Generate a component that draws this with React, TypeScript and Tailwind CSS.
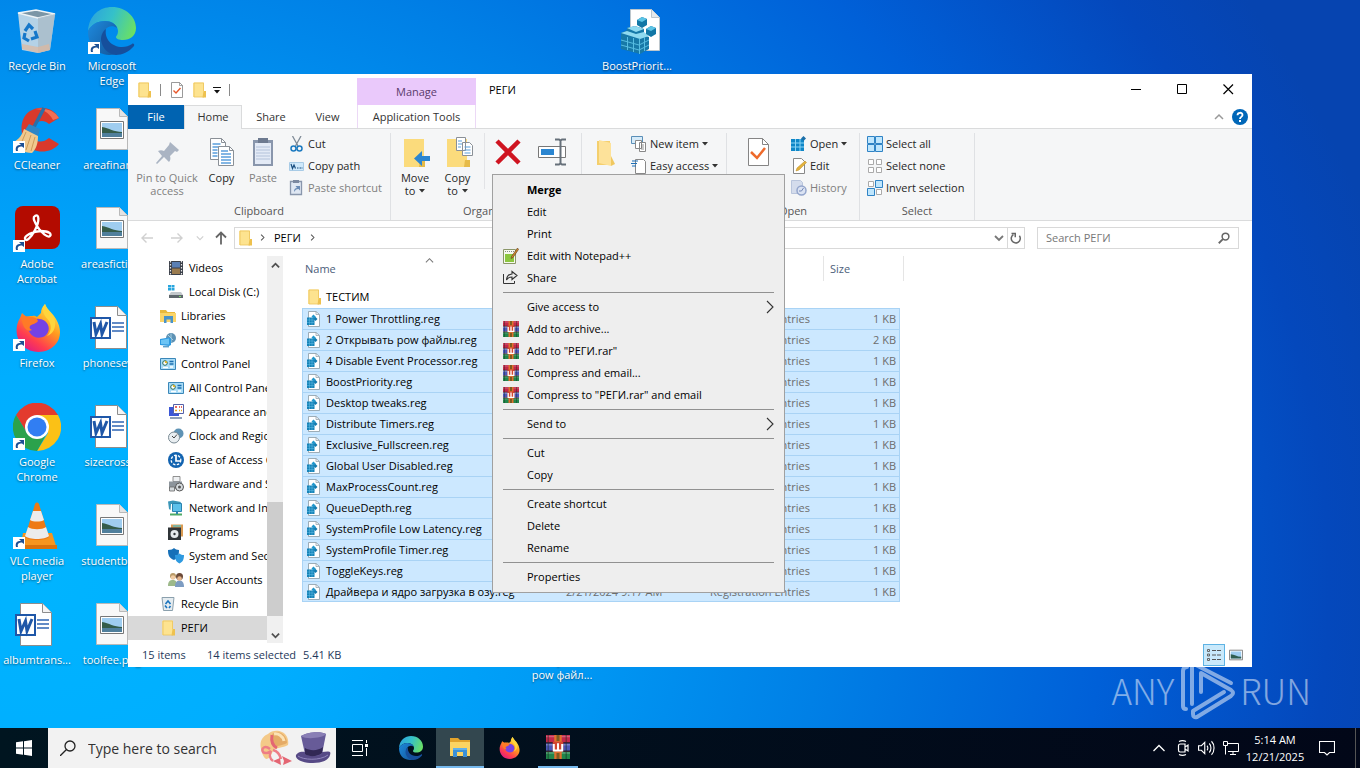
import type { ReactNode } from "react";

type IconProps = { size?: number; box?: string; className?: string; children: ReactNode };

function Icon({ size = 16, box = "0 0 16 16", className = "", children }: IconProps) {
  return (
    <svg width={size} height={size} viewBox={box} fill="none" aria-hidden="true" className={"shrink-0 " + className}>
      {children}
    </svg>
  );
}

/* ---------- small shared icons ---------- */

const Folder = ({ size = 16 }: { size?: number }) => (
  <Icon size={size}>
    <path d="M2.500 1H12v10l2.500 1v3h-12z" fill="#f7d775" />
    <path d="M2.500.5H13V15H2.500z" fill="#fde38f" />
    <path d="M12.500 9H15v6.500h-3.500z" fill="#eec14e" />
    <path d="M3 1v14h10M3 1h9.500v8" stroke="#ecc45a" strokeWidth=".8" />
  </Icon>
);

const PropertiesSheet = ({ size = 16 }: { size?: number }) => (
  <Icon size={size}>
    <path d="M2.500.5h8l3 3v12h-11z" fill="#fff" stroke="#808080" strokeWidth=".8" />
    <path d="M10.500.5v3h3" stroke="#808080" strokeWidth=".7" />
    <path d="M4.500 8.500 7 11l4.500-5" stroke="#e8572a" strokeWidth="1.400" />
  </Icon>
);

const RegFile = () => (
  <Icon>
    <path d="M2.500.5h7.500l3.500 3v12h-11z" fill="#fff" stroke="#8a9aa5" strokeWidth=".8" />
    <path d="M10 .5v3h3" stroke="#8a9aa5" strokeWidth=".7" />
    <path d="M1 6.500h7.500V14H1z" fill="#1583b8" />
    <path d="M1 9h7.500M1 11.500h7.500M3.500 6.500V14M6 6.500V14" stroke="#64bfe6" strokeWidth=".5" />
    <path d="m7.500 3.500 2.500 2.500-2 2L5.500 5.500z" fill="#2297cc" />
    <path d="m9.500 6 2 2-2 2-2-2z" fill="#127aae" />
  </Icon>
);

const Rar = ({ size = 16 }: { size?: number }) => (
  <Icon size={size}>
    <path d="M0 0h16v5H0z" fill="#c3274a" />
    <path d="M0 5.500h16v5H0z" fill="#4b57b8" />
    <path d="M0 11h16v5H0z" fill="#22864b" />
    <path d="M0 1h16M0 12h16M0 6.500h16" stroke="#fff" strokeOpacity=".25" />
    <path d="M1.500 0v16M13.500 0v16" stroke="#13281c" strokeOpacity=".4" />
    <path d="M0 5.200h16M0 10.800h16" stroke="#40202c" strokeWidth=".7" />
    <path d="M5.500 0h5v16h-5z" fill="#e0702d" />
    <path d="M7 0h2v4H7zM7 12h2v4H7z" fill="#7d5b22" />
    <path d="M4.500 4.500h7v6.500h-7z" fill="#d2462f" />
    <path d="M5.200 6v4.300h5.600V6M8 5.500v4.500" stroke="#fff" strokeWidth="1.300" />
  </Icon>
);

const Caret = () => (
  <svg width="6" height="4" viewBox="0 0 6 4" className="shrink-0" aria-hidden="true">
    <path d="M0 0h6L3 3.500z" fill="#333" />
  </svg>
);

const Chevron = ({ dir, color = "#666", size = 8, w = 1.5 }: { dir: "up" | "down" | "right"; color?: string; size?: number; w?: number }) => (
  <Icon size={size} box="0 0 10 10">
    <path d={dir === "up" ? "M1 7l4-4 4 4" : dir === "down" ? "M1 3l4 4 4-4" : "M3 1l4 4-4 4"} stroke={color} strokeWidth={w} />
  </Icon>
);

/* ---------- desktop ---------- */

const Shortcut = () => (
  <g>
    <path d="M0 35h12v12H0z" fill="#fff" />
    <path d="M3 45c-1-4 1-6 4-6h1l-2-2h5v5l-2-1.500c-3 0-5 1-4 4.500z" fill="#1d5094" />
  </g>
);

const EdgeArt = () => (
  <g>
    <defs>
      <linearGradient id="edgeTop" x1="0" y1="0" x2="48" y2="20" gradientUnits="userSpaceOnUse">
        <stop stopColor="#2b9fe0" />
        <stop offset=".5" stopColor="#35c1c9" />
        <stop offset="1" stopColor="#6be063" />
      </linearGradient>
      <linearGradient id="edgeLow" x1="0" y1="20" x2="40" y2="48" gradientUnits="userSpaceOnUse">
        <stop stopColor="#1d86d8" />
        <stop offset="1" stopColor="#114a8b" />
      </linearGradient>
    </defs>
    <path d="M0 24C1 8 12 0 24 0c14 0 24 10 24 21 0 8-6 12-13 12-4 0-7-1-7-3 0-1 2-2 2-6 0-5-5-10-13-10C9 14 3 18 0 24z" fill="url(#edgeTop)" />
    <path d="M0 24c3-6 9-10 17-10 6 0 11 3 12 7-7-5-16 2-14 11 2 8 9 12 17 12-3 3-7 4-11 4C7 47 0 37 0 24z" fill="url(#edgeLow)" />
    <path d="M18 22c-2 10 6 18 16 18 4 0 7-1 10-3 1-1 3 0 2 2-5 6-12 9-18 9-8-1-14-7-15-15 0-5 2-9 5-11z" fill="#164f9c" />
  </g>
);

const FirefoxArt = () => (
  <g>
    <defs>
      <linearGradient id="fox" x1="40" y1="4" x2="10" y2="46" gradientUnits="userSpaceOnUse">
        <stop stopColor="#fff04a" />
        <stop offset=".4" stopColor="#ff9a1f" />
        <stop offset=".75" stopColor="#ff3d4f" />
        <stop offset="1" stopColor="#e01b82" />
      </linearGradient>
    </defs>
    <path d="M30 0c2 6 8 9 11 15 6 10 5 20-1 26-8 9-24 9-32 1C0 34 0 22 5 14l2-5 4 4c2-1 4-1 6-1 0 0 3-1 5 1l4-4c0-3 1-6 4-9z" fill="url(#fox)" />
    <path d="M15 18c4-4 10-4 15-1 5 4 5 11 0 15-5 3-12 2-15-3-2-3-3-7 0-11z" fill="#7542e5" />
    <path d="M7 10c3 2 5 3 9 3 3 0 6 1 7 4-2 3-6 3-8 5-1 2 0 3 2 4-3 2-6 0-8-3-2-4-3-8-2-13z" fill="#ff7a26" />
    <path d="M30 0c-5 7 0 12 4 17 3 5 2 11-2 15 6-2 9-8 8-15-1-7-8-10-10-17z" fill="#ffd53c" />
  </g>
);

const WordArt = () => (
  <g>
    <path d="M7.500 2.500h22l9 9v33h-31z" fill="#fff" stroke="#8d8d8d" />
    <path d="M29.500 2.500v9h9" fill="#f4f4f4" stroke="#8d8d8d" />
    <path d="M24 19h12M24 23h12M24 27h12" stroke="#2f66b4" strokeWidth="1.300" />
    <path d="M3 14h19v20H3z" fill="#fff" stroke="#1f57a8" strokeWidth="2" />
    <path d="M6 18l2 12 4.500-10L14 30l5-12" stroke="#1f57a8" strokeWidth="3" />
  </g>
);

const PhotoArt = () => (
  <g>
    <path d="M8.500 2.500h23l8 8v33h-31z" fill="#f8f8f8" stroke="#b9b9b9" />
    <path d="M31.500 2.500v8h8" fill="#e3e3e3" stroke="#b9b9b9" />
    <path d="M12.500 15.500h23v17h-23z" fill="#fff" stroke="#777" />
    <path d="M14 17h20v14H14z" fill="#9fcdf0" />
    <path d="M14 21c7 1 12 5 20 5v2H14z" fill="#345c4a" />
    <path d="M14 27h20v4H14z" fill="#507f9c" />
  </g>
);

const desktopArt: Record<string, ReactNode> = {
  bin: (
    <g>
      <path d="M5 6l18-3 19 4-5 36-12 3-16-3z" fill="#d4dee5" fillOpacity=".85" />
      <path d="M5 6l20 5 17-4-19-4z" fill="#7b96a6" stroke="#eef4f7" strokeWidth="1.500" />
      <path d="M25 11l17-4-5 36-12 3z" fill="#a9bcc8" fillOpacity=".8" />
      <path d="M9 42l16 4 12-3-1-6-11 3-16-3z" fill="#dfb89c" fillOpacity=".7" />
      <path d="M12 24l4-6 4 4M22 24l2 6-6 2M16 34l-5-3 1-5" stroke="#1677c9" strokeWidth="3.200" />
    </g>
  ),
  edge: <><EdgeArt /><Shortcut /></>,
  ccleaner: (
    <g>
      <path d="M46 12L36 18c-6-6-17-3-17 8 0 9 9 13 17 6l10 6c-8 10-26 10-33 0C6 28 7 11 17 5c10-6 23-4 29 7z" fill="#d9392b" />
      <path d="M46 12c-4-7-14-11-24-9 7 0 14 3 18 11z" fill="#f16f55" />
      <path d="M31 2L21 21" stroke="#2a6fa8" strokeWidth="3.500" />
      <path d="M16 18l11 5-2 7-13-6z" fill="#2f86c6" />
      <path d="M11 23l14 7c0 8-2 13-6 17C10 47 4 43 1 36c5-3 8-7 10-13z" fill="#f0c98e" />
      <path d="M13 26L7 40M18 29l-5 15M22 31l-4 14" stroke="#cf9a58" />
      <Shortcut />
    </g>
  ),
  acrobat: (
    <g>
      <rect x="2" y="1" width="45" height="43" rx="8" fill="#b30b00" />
      <path d="M22 11c4-3 5 5 0 14-4 8-9 12-10 9s8-8 16-8 11 3 9 5-9-3-13-10-4-9-2-10z" stroke="#fff" strokeWidth="2.300" />
      <Shortcut />
    </g>
  ),
  firefox: <><g transform="translate(2 0)"><FirefoxArt /></g><Shortcut /></>,
  chrome: (
    <g>
      <path d="M24 12h21a24 24 0 0 0-42 0l11 18z" fill="#e33b2e" />
      <path d="M24 12h21a24 24 0 0 1-21 36l11-18z" fill="#fbc116" />
      <path d="M3 12l11 18a12 12 0 0 0 20 0L24 48A24 24 0 0 1 3 12z" fill="#2ba24c" />
      <circle cx="24" cy="24" r="12" fill="#fff" />
      <circle cx="24" cy="24" r="9.500" fill="#317ef3" />
      <Shortcut />
    </g>
  ),
  vlc: (
    <g>
      <path d="M10 31h29l5 16H7z" fill="#f5951f" />
      <path d="M7 43h37v4H7z" fill="#d9720d" />
      <path d="M22 2c1-2 3-2 4 0l10 33c-3 4-21 4-24 0z" fill="#ee7a15" />
      <path d="M20 9h8l3 9c-3 2-11 2-14 0zM15 25c4 3 14 3 18 0l3 9c-4 4-20 4-24 0z" fill="#ececec" />
      <Shortcut />
    </g>
  ),
  word: <WordArt />,
  photo: <PhotoArt />,
  reg: (
    <g>
      <path d="M17.500 2.500h21l8 8v33h-29z" fill="#fff" stroke="#bcc6cc" />
      <path d="M38.500 2.500v8h8" fill="#e5e9eb" stroke="#bcc6cc" />
      <path d="M8 26l6-3v-2l8-2 9 3v6l5 2v12l-9 5-19-5z" fill="#1779a8" />
      <path d="M8 26l6-2 9 3 8-2 5 4-9 3zM14 21l8-2 9 3-8 3z" fill="#8fdaf0" />
      <path d="M14.500 30v13M20.500 31v14M26.500 32v15M31.500 30v14M8 33l18 5 10-5M8 38l18 5 10-5" stroke="#57bde2" />
      <path d="M24 13l5-3 5 2v6l-5 3-5-3zM33 22l5-3 5 2v6l-5 3-5-3z" fill="#1277a6" />
      <path d="M24 13l5-3 5 2-5 3zM33 22l5-3 5 2-5 3z" fill="#5cc4e6" />
    </g>
  ),
};

const desktopItems = [
  { art: "bin", label: ["Recycle Bin"], col: "col-start-1", row: "row-start-1" },
  { art: "ccleaner", label: ["CCleaner"], col: "col-start-1", row: "row-start-2" },
  { art: "acrobat", label: ["Adobe", "Acrobat"], col: "col-start-1", row: "row-start-3" },
  { art: "firefox", label: ["Firefox"], col: "col-start-1", row: "row-start-4" },
  { art: "chrome", label: ["Google", "Chrome"], col: "col-start-1", row: "row-start-5" },
  { art: "vlc", label: ["VLC media", "player"], col: "col-start-1", row: "row-start-6" },
  { art: "word", label: ["albumtrans..."], col: "col-start-1", row: "row-start-7" },
  { art: "edge", label: ["Microsoft", "Edge"], col: "col-start-2", row: "row-start-1" },
  { art: "photo", label: ["areafinan..."], col: "col-start-2", row: "row-start-2" },
  { art: "photo", label: ["areasfictio..."], col: "col-start-2", row: "row-start-3" },
  { art: "word", label: ["phonesev..."], col: "col-start-2", row: "row-start-4" },
  { art: "word", label: ["sizecross..."], col: "col-start-2", row: "row-start-5" },
  { art: "photo", label: ["studentbo..."], col: "col-start-2", row: "row-start-6" },
  { art: "photo", label: ["toolfee.png"], col: "col-start-2", row: "row-start-7" },
  { art: "reg", label: ["2 Открывать", "pow файл..."], col: "col-start-8", row: "row-start-7" },
  { art: "reg", label: ["BoostPriorit..."], col: "col-start-9", row: "row-start-1" },
];

function Desktop() {
  return (
    <div className="grid auto-cols-[74px] grid-rows-[repeat(7,99px)] justify-start gap-x-px">
      {desktopItems.map((d) => (
        <button key={d.label.join()} className={"flex flex-col items-center gap-[3px] pt-[7px] leading-[15px] text-white [text-shadow:0_1px_2px_rgb(0_0_0/0.5)] " + d.col + " " + d.row}>
          <Icon size={48} box="0 0 48 48">{desktopArt[d.art]}</Icon>
          <span className="flex flex-col items-center whitespace-nowrap">
            {d.label.map((l) => <span key={l}>{l}</span>)}
          </span>
        </button>
      ))}
    </div>
  );
}

/* ---------- explorer: title and ribbon ---------- */

function TitleBar() {
  return (
    <header className="flex h-[31px] shrink-0 bg-white">
      <div className="flex w-[229px] items-center pl-2">
        <Folder />
        <span className="mx-2 h-3 w-px bg-[#8a8a8a]" />
        <button aria-label="Properties"><PropertiesSheet /></button>
        <button aria-label="New folder" className="ml-1.5"><Folder /></button>
        <button aria-label="Customize toolbar" className="ml-1.5">
          <svg width="8" height="8" viewBox="0 0 8 8" aria-hidden="true"><path d="M0 1.500h8" stroke="#111" /><path d="M1 4h6L4 7.500z" fill="#111" /></svg>
        </button>
        <span className="ml-2 h-3 w-px bg-[#8a8a8a]" />
      </div>
      <div className="mt-1 flex w-[119px] items-center justify-center bg-[#eac9fb] text-[#5a3b6b]">Manage</div>
      <h1 className="flex flex-1 items-center pl-[13px] text-black">РЕГИ</h1>
      <div className="flex items-center text-black">
        <button aria-label="Minimize" className="flex w-[45px] justify-center"><Icon size={11} box="0 0 11 11"><path d="M0 5.500h10" stroke="#000" /></Icon></button>
        <button aria-label="Maximize" className="flex w-[46px] justify-center"><Icon size={11} box="0 0 11 11"><path d="M.5.5h9v9h-9z" stroke="#000" /></Icon></button>
        <button aria-label="Close" className="flex w-[47px] justify-center"><Icon size={11} box="0 0 11 11"><path d="M.5.5l9.500 9.500M10 .5L.5 10" stroke="#000" strokeWidth="1.200" /></Icon></button>
      </div>
    </header>
  );
}

function Tabs() {
  return (
    <nav className="flex h-6 shrink-0 border-b border-[#dadbdc] text-[#333]">
      <button className="h-6 w-14 bg-[#0063b1] text-white">File</button>
      <button className="h-6 w-[58px] border border-b-0 border-[#dadbdc] bg-[#f5f6f7] pb-0.5">Home</button>
      <button className="w-[58px]">Share</button>
      <button className="w-[57px] pr-0.5">View</button>
      <button className="w-[119px] whitespace-nowrap border-x border-[#ecd9f6]">Application Tools</button>
      <div className="flex flex-1 items-center justify-end gap-2 pr-1">
        <button aria-label="Collapse ribbon"><Chevron dir="up" color="#999" size={10} /></button>
        <button aria-label="Help">
          <Icon>
            <circle cx="8" cy="8" r="8" fill="#0067b8" />
            <path d="M5.500 6.200C5.500 3 10.500 3 10.500 6c0 2-2.500 1.800-2.500 4" stroke="#fff" strokeWidth="1.800" />
            <path d="M7 11h2v2H7z" fill="#fff" />
          </Icon>
        </button>
      </div>
    </nav>
  );
}

function Group({ label, width, children }: { label: string; width: string; children: ReactNode }) {
  return (
    <section aria-label={label} className={"flex shrink-0 flex-col border-r border-[#dfe1e4] " + width}>
      <div className="flex flex-1">{children}</div>
      <h2 className="h-[17px] text-center leading-4 text-[#555]">{label}</h2>
    </section>
  );
}

function Big({ art, name, lines = [], caret, dim, width }: { art: ReactNode; name: string; lines?: string[]; caret?: boolean; dim?: boolean; width: string }) {
  return (
    <button aria-label={name} className={"flex shrink-0 flex-col items-center gap-[3px] pt-[3px] leading-[13px] " + width + (dim ? " text-[#808080]" : " text-[#262626]")}>
      <Icon size={32} box="0 0 32 32">{art}</Icon>
      <span className="flex flex-col items-center whitespace-nowrap">
        {lines.map((l, i) => (
          <span key={l} className="flex items-center gap-1">{l}{caret && i === lines.length - 1 ? <Caret /> : null}</span>
        ))}
      </span>
    </button>
  );
}

function Small({ art, label, caret, dim }: { art: ReactNode; label: string; caret?: boolean; dim?: boolean }) {
  return (
    <button className={"flex h-[22px] items-center gap-[3px] whitespace-nowrap " + (dim ? "text-[#808080]" : "text-[#262626]")}>
      <Icon>{art}</Icon>
      {label}
      {caret ? <Caret /> : null}
    </button>
  );
}

function Ribbon() {
  return (
    <div className="flex h-[92px] shrink-0 overflow-hidden border-b border-[#dadbdc] bg-[#f5f6f7] pt-1">
      <Group label="Clipboard" width="w-[263px]">
        <Big name="Pin to Quick access" width="w-[78px]" dim lines={["Pin to Quick", "access"]} art={<path d="M19 6l9 8-2 2-2-1-5 5c1 3 0 5-1 6l-5-5-7 7-1-1 6-7-4-5c2-1 4-1 6 0l5-6z" fill="#aab4c3" />} />
        <Big name="Copy" width="w-[31px]" lines={["Copy"]} art={
          <g>
            <path d="M4.500 2.500h11l4 4v17h-15z" fill="#fff" stroke="#8a9097" />
            <path d="M6.500 8h8M6.500 11h11M6.500 14h5M6.500 17h5M6.500 20h5" stroke="#5b9fdb" strokeWidth="1.300" />
            <path d="M12.500 10.500h11l4 4v15h-15z" fill="#fff" stroke="#8a9097" />
            <path d="M15 15h7M15 18h10M15 21h10M15 24h10M15 27h10" stroke="#5b9fdb" strokeWidth="1.300" />
            <path d="M15.500 2.500v4h4M23.500 10.500v4h4" stroke="#8a9097" />
          </g>} />
        <Big name="Paste" width="w-[52px]" dim lines={["Paste"]} art={
          <g>
            <path d="M6 4h20v26H6z" fill="#8996ac" />
            <path d="M8 7h16v21H8z" fill="#e3eaf6" />
            <path d="M11 2h10v5H11z" fill="#6d7a90" />
            <path d="M9 11h14M9 14h14M9 17h14M9 20h14M9 23h14" stroke="#b3c2da" />
          </g>} />
        <div className="flex flex-col">
          <Small label="Cut" art={<g><path d="M3.500 0l5.500 10M12 0L6.500 10" stroke="#7f8b97" strokeWidth="1.300" /><circle cx="4.500" cy="12.500" r="2.500" stroke="#1c7ac0" strokeWidth="1.500" /><circle cx="10.500" cy="12.500" r="2.500" stroke="#1c7ac0" strokeWidth="1.500" /></g>} />
          <Small label="Copy path" art={<g><path d="M.5 4.500h14v8H.5z" fill="#cfe9fb" stroke="#a8cbe6" /><path d="M2 6l1.500 4.500L5 7l1.500 3.500M8 10h1.500M10.500 10H12M12.500 10h1" stroke="#1b4f80" strokeWidth="1.200" /></g>} />
          <Small dim label="Paste shortcut" art={<g><path d="M1.500 1.500h11v13h-11z" fill="#dfe7f3" stroke="#8996ac" strokeWidth="1.300" /><path d="M4 0h6v3H4z" fill="#7b88a0" /><path d="M5 12c0-3 1-4 3-4L6.500 6h4.500v4.500L9.500 9C7 9 6.500 10 5 12z" fill="#6b8bb5" /></g>} />
        </div>
      </Group>

      <Group label="Organize" width="w-[191px]">
        <Big name="Move to" width="w-[48px]" caret lines={["Move", "to"]} art={
          <g><path d="M5 3h20v28H5z" fill="#fbdb7c" /><path d="M21 22h5v9h-6z" fill="#e6bb48" /><path d="M31 20v5h-8v5l-8-7.500 8-7.500v5z" fill="#2b86d1" /></g>} />
        <Big name="Copy to" width="w-[37px]" caret lines={["Copy", "to"]} art={
          <g><path d="M5 3h20v28H5z" fill="#fbdb7c" /><path d="M23 24h5v7h-6z" fill="#e6bb48" /><path d="M14.500 1.500h9v13h-9zM20.500 6.500h7l3 3v10h-10z" fill="#fff" stroke="#8a9097" /><path d="M16 5h4M16 8h4M16 11h3M22.500 11h6M22.500 14h6M22.500 17h6" stroke="#5b9fdb" strokeWidth="1.200" /></g>} />
        <span className="ml-2 h-14 w-px bg-[#e2e3e6]" />
        <Big name="Delete" width="w-[46px]" art={<path d="M5 5l22 22M27 5L5 27" stroke="#cf1420" strokeWidth="4.500" />} />
        <Big name="Rename" width="w-[44px]" art={
          <g><path d="M1.500 10.500h27v11h-27z" fill="#fff" stroke="#777" /><path d="M4 13h13v6H4z" fill="#2b86d1" /><path d="M18 3.500h4l1.500 1L25 3.500h4M18 28.500h4l1.500-1 1.500 1h4M23.500 4v24" stroke="#66707a" strokeWidth="2" /></g>} />
      </Group>

      <Group label="New" width="w-[145px]">
        <Big name="New folder" width="w-[47px]" art={<g><path d="M7 5h13v24H7z" fill="#f4cf6d" /><path d="M9 4l12 3v23L9 27z" fill="#fde29a" /><path d="M21 20l4 8-4 2z" fill="#f0c860" /></g>} />
        <div className="flex flex-col pl-0.5">
          <Small caret label="New item" art={<g><path d="M.5.5h11v7H.5z" fill="#d6ebf9" stroke="#5a8fb8" /><path d="M4.500 4.500h6v8h-6zM8.500 6.500h6v9h-6z" fill="#fff" stroke="#888" /><path d="M10 9h3M10 11h3M10 13h3" stroke="#777" strokeWidth=".8" /></g>} />
          <Small caret label="Easy access" art={<g><path d="M4.500 1.500h8l2 2v12h-10z" fill="#fff" stroke="#888" /><path d="M1 3h6M0 5.500h6M1 8h4" stroke="#1c6fb8" strokeWidth="1.200" /></g>} />
        </div>
      </Group>

      <Group label="Open" width="w-[133px]">
        <Big name="Properties" width="w-[61px]" art={<g><path d="M6.500 2.500h14l6 6v21h-20z" fill="#fff" stroke="#858585" /><path d="M20.500 2.500v6h6" stroke="#858585" /><path d="M9 16l6 6 8-10" stroke="#ee6a2b" strokeWidth="2.500" /></g>} />
        <div className="flex flex-col pl-[3px]">
          <Small caret label="Open" art={<g><path d="M0 3h13v12H0z" fill="#0f86c7" /><path d="M0 7h13M0 11h13M4.500 3v12M9 3v12" stroke="#8ad4f5" /><path d="m12.500 0 2.500 2.500-2.500 2.500L10 2.500z" fill="#1c6fa8" /></g>} />
          <Small label="Edit" art={<g><path d="M2.500.5h8l3 3v12h-11z" fill="#fff" stroke="#888" /><path d="M5 13l1-3 8-7 1.500 1.500L8 12z" fill="#e3b23c" stroke="#b98a22" strokeWidth=".5" /></g>} />
          <Small dim label="History" art={<g><path d="M.5.5h9l2 2v11H.5z" fill="#d4dcec" stroke="#b9c5dc" /><circle cx="10.500" cy="10.500" r="4.500" fill="#dbe3f3" stroke="#93a5cc" strokeWidth="1.500" /><path d="M8 11h2.500l2-3" stroke="#7387b5" /></g>} />
        </div>
      </Group>

      <Group label="Select" width="w-[115px]">
        <div className="flex flex-col pl-[7px]">
          <Small label="Select all" art={<path d="M.5.5h7v7h-7zM8.500.5h7v7h-7zM.5 8.500h7v7h-7zM8.500 8.500h7v7h-7z" fill="#bfe6fd" stroke="#2f83c5" />} />
          <Small label="Select none" art={<path d="M1.500 1.500h5v5h-5zM9.500 1.500h5v5h-5zM1.500 9.500h5v5h-5zM9.500 9.500h5v5h-5z" fill="#fff" stroke="#aaa" />} />
          <Small label="Invert selection" art={<g><path d="M1.500 1.500h5v5h-5zM9.500 9.500h5v5h-5z" fill="#fff" stroke="#aaa" /><path d="M8.500.5h7v7h-7zM.5 8.500h7v7h-7z" fill="#bfe6fd" stroke="#2f83c5" /></g>} />
        </div>
      </Group>
    </div>
  );
}

function AddressBar() {
  return (
    <div className="flex h-[35px] shrink-0 items-center pr-[13px] pb-0.5 pl-3">
      <button aria-label="Back" className="w-7"><Icon><path d="M13 8H2M6.500 3.500L2 8l4.500 4.500" stroke="#d0d0d0" strokeWidth="1.400" /></Icon></button>
      <button aria-label="Forward" className="w-7"><Icon><path d="M3 8h11M9.500 3.500L14 8l-4.500 4.500" stroke="#d0d0d0" strokeWidth="1.400" /></Icon></button>
      <button aria-label="Recent locations" className="w-[17px]"><Chevron dir="down" color="#d0d0d0" size={8} /></button>
      <button aria-label="Up" className="w-[21px]"><Icon><path d="M8 14.500V2.500M3 7.500l5-5 5 5" stroke="#666" strokeWidth="1.800" /></Icon></button>
      <div className="flex h-[22px] flex-1 items-center border border-[#d9d9d9] pl-0.5 text-black">
        <Folder />
        <span className="pl-1.5"><Chevron dir="right" color="#555" size={7} /></span>
        <button className="px-2">РЕГИ</button>
        <Chevron dir="right" color="#555" size={7} />
        <span className="flex-1" />
        <button aria-label="Previous locations" className="flex w-4 justify-center"><Chevron dir="down" color="#777" size={10} w={1.8} /></button>
        <button aria-label="Refresh" className="flex h-full w-[17px] items-center justify-center border-l border-[#d9d9d9]">
          <Icon size={12}><path d="M12.500 5a6 6 0 1 1-8-1.500M2 2h5v5" stroke="#666" strokeWidth="2" /></Icon>
        </button>
      </div>
      <label className="ml-3 flex h-[22px] w-[202px] items-center border border-[#d9d9d9] px-2">
        <span className="sr-only">Search in РЕГИ</span>
        <input type="search" placeholder="Search РЕГИ" className="h-full min-w-0 flex-1 bg-transparent outline-none placeholder:text-[#777]" />
        <Icon size={12}><circle cx="10" cy="6" r="4.500" stroke="#666" strokeWidth="2" /><path d="M6.500 9.500L1 15" stroke="#666" strokeWidth="2.400" /></Icon>
      </label>
    </div>
  );
}

/* ---------- explorer: navigation pane ---------- */

const panel = <g><path d="M.5 2.500h15v11H.5z" fill="#a9dcf7" stroke="#3b87b8" /><circle cx="5" cy="7" r="2.300" fill="#fff" stroke="#2a6d58" /><path d="M5 7V4.700A2.300 2.300 0 0 1 7.300 7z" fill="#e4b52c" /><path d="M9.500 5.500h4M9.500 8h4" stroke="#1d6fb0" strokeWidth="1.300" /><path d="M3 11.500h5M10 11h3" stroke="#fff" strokeWidth="1.300" /></g>;

const navItems: { label: string; deep?: boolean; art: ReactNode }[] = [
  { label: "Videos", deep: true, art: <g><path d="M1 1h14v14H1z" fill="#3a3f49" /><path d="M4 2h8v5.500H4z" fill="#5a7fb4" /><path d="M4 8.500h8V14H4z" fill="#9a7b4f" /><path d="M2.500 1v14M13.500 1v14" stroke="#e8e8e8" strokeWidth="1.200" strokeDasharray="1.500 1.500" /></g> },
  { label: "Local Disk (C:)", deep: true, art: <g><path d="M0 1h3v2.500H0zM3.500 1h3v2.500h-3zM0 4h3v2.500H0zM3.500 4h3v2.500h-3z" fill="#27a5de" /><path d="M3 8h10l2 3H1z" fill="#c3c8cc" /><path d="M1 11h14v3H1z" fill="#5e666c" /><path d="M11 12.500h2" stroke="#7fe06a" /></g> },
  { label: "Libraries", art: <g><path d="M0 2h6l1.500 2H15v10H0z" fill="#eab93c" /><path d="M0 5h16v9H0z" fill="#fbd569" /><path d="M4 8h9v7h-2.500v-3.500h-4V15H4z" fill="#4a93c9" /></g> },
  { label: "Network", art: <g><circle cx="11" cy="6" r="5" fill="#5f93b5" /><path d="M8 3l5 5M11 1.500v9" stroke="#a5cfe2" /><path d="M0 7l9-1.500 2 1v6.500L9 14 0 13z" fill="#2f9ae0" /><path d="M1 8l8-1.500v6L1 12z" fill="#6cc4f5" /><path d="M3 14.800h6" stroke="#1d78b4" /></g> },
  { label: "Control Panel", art: panel },
  { label: "All Control Panel Items", deep: true, art: panel },
  { label: "Appearance and Personalization", deep: true, art: <g><path d="M1 3h10v9H1z" fill="#3c57d6" /><path d="M5.500.5h10v9h-10z" fill="#fff" stroke="#5560a8" /><path d="M7 3h2M11 3h1M13 3h1" stroke="#e23b2e" strokeWidth="1.500" /><path d="M7 6.500h2M11 6.500h1M13 6.500h1" stroke="#e8a61d" strokeWidth="1.500" /><path d="M2 14h12" stroke="#8fa0b8" strokeWidth="2" /></g> },
  { label: "Clock and Region", deep: true, art: <g><circle cx="10.500" cy="5.500" r="5" fill="#5f93b5" /><circle cx="6" cy="9.500" r="5.500" fill="#e9eef1" stroke="#7a8a94" /><path d="M6 10l3-3.500M6 10L4 8" stroke="#444" /></g> },
  { label: "Ease of Access Center", deep: true, art: <g><circle cx="8" cy="8" r="8" fill="#1263b0" /><path d="M8 3v6h4.500" stroke="#fff" strokeWidth="1.700" /><circle cx="8" cy="8" r="4.800" stroke="#fff" strokeWidth="1.300" strokeDasharray="2.500 1.500" /></g> },
  { label: "Hardware and Sound", deep: true, art: <g><path d="M5 .5h7v5H5z" fill="#eef0f2" stroke="#777" strokeWidth=".8" /><path d="M1 5.500h13V13H1z" fill="#8d959c" /><path d="M1.500 11h5v4h-5z" fill="#d5dadd" stroke="#666" strokeWidth=".8" /><circle cx="11.500" cy="11" r="4" fill="#d5dadd" stroke="#555" /><circle cx="11.500" cy="11" r="1.500" fill="#555" /></g> },
  { label: "Network and Internet", deep: true, art: <g><path d="M0 1.500l5-1 8 1.500-1 2H3l-.5 6L1 9z" fill="#3b96b8" /><path d="M4.500 3.500h9v8h-9z" fill="#5cc0ea" stroke="#2a83b0" /><path d="M2 14.500h12" stroke="#4faa66" strokeWidth="2" /><path d="M9 11v3" stroke="#2a83b0" strokeWidth="2" /></g> },
  { label: "Programs", deep: true, art: <g><path d="M3 .5h12v12H3z" fill="#d99a52" /><path d="M5 1h8v2H5z" fill="#7fb3a0" /><path d="M0 3.500h13V16H0z" fill="#2f3437" /><circle cx="6.500" cy="10" r="4" fill="#e6eaec" /><circle cx="6.500" cy="10" r="1.200" fill="#2f3437" /></g> },
  { label: "System and Security", deep: true, art: <g><path d="M0 2c3 0 5-1 6-2 1 1 3 2 5 2 0 5-1 8-5 10C1 10 0 7 0 2z" fill="#1670b8" /><path d="M7 7c2 0 3-.5 4.500-1.500C13 6.500 14 7 16 7c0 4-1 7-4.500 8.500C8 14 7 11 7 7z" fill="#2f9ae0" /></g> },
  { label: "User Accounts", deep: true, art: <g><circle cx="5" cy="4" r="3" fill="#b89a68" /><circle cx="11.500" cy="4.500" r="3.500" fill="#6b4a38" /><path d="M0 14c0-5 2-6 5-6s4 2 4 6z" fill="#9db98a" /><path d="M7 15c0-5 2-6.500 4.500-6.500S16 10 16 15z" fill="#7d9cc2" /><circle cx="5" cy="5.500" r="2.200" fill="#f1cba3" /><circle cx="11.500" cy="6.500" r="2.300" fill="#e6b58c" /></g> },
  { label: "Recycle Bin", art: <g><path d="M2 1.500h12l-1.500 13h-9z" fill="#e5ecf0" stroke="#8ba0ad" /><path d="M5.500 8L8 5l2.500 3M10.500 10L9 12M7 12l-2-2.500" stroke="#1b74bd" strokeWidth="1.600" /></g> },
];

function NavPane() {
  return (
    <aside className="flex w-[155px] shrink-0">
      <ul className="w-[139px] overflow-hidden whitespace-nowrap text-black">
        {navItems.map((n) => (
          <li key={n.label}>
            <button className={"flex h-6 w-full items-center gap-[5px] " + (n.deep ? "pl-10" : "pl-8")}><Icon>{n.art}</Icon>{n.label}</button>
          </li>
        ))}
        <li>
          <button className="flex h-6 w-full items-center gap-[5px] bg-[#d9d9d9] pl-8"><Folder />РЕГИ</button>
        </li>
      </ul>
      <div className="flex w-4 flex-col items-center bg-[#f0f0f0]">
        <button aria-label="Scroll up" className="flex h-[18px] items-center"><Chevron dir="up" color="#505050" size={9} w={2} /></button>
        <div className="flex w-full flex-1 items-end"><div className="h-[114px] w-full bg-[#cdcdcd]" /></div>
        <button aria-label="Scroll down" className="flex h-[27px] items-center pt-3"><Chevron dir="down" color="#505050" size={9} w={2} /></button>
      </div>
    </aside>
  );
}

/* ---------- explorer: file list ---------- */

const files: { name: string; date?: string; size: string }[] = [
  { name: "1 Power Throttling.reg", size: "1 KB" },
  { name: "2 Открывать pow файлы.reg", size: "2 KB" },
  { name: "4 Disable Event Processor.reg", size: "1 KB" },
  { name: "BoostPriority.reg", size: "1 KB" },
  { name: "Desktop tweaks.reg", size: "1 KB" },
  { name: "Distribute Timers.reg", size: "1 KB" },
  { name: "Exclusive_Fullscreen.reg", size: "1 KB" },
  { name: "Global User Disabled.reg", size: "1 KB" },
  { name: "MaxProcessCount.reg", size: "1 KB" },
  { name: "QueueDepth.reg", size: "1 KB" },
  { name: "SystemProfile Low Latency.reg", size: "1 KB" },
  { name: "SystemProfile Timer.reg", size: "1 KB" },
  { name: "ToggleKeys.reg", size: "1 KB" },
  { name: "Драйвера и ядро загрузка в озу.reg", date: "2/21/2024 9:17 AM", size: "1 KB" },
];

function FileList() {
  return (
    <div className="flex min-w-0 flex-1 items-start overflow-hidden pl-[19px]">
      <table className="w-[598px] table-fixed border-separate border-spacing-0 whitespace-nowrap text-left">
        <thead className="text-[#4c607a]">
          <tr className="h-[25px]">
            <th className="relative w-[258px] pl-[3px] font-normal">
              Name
              <span className="absolute top-0 left-[123px]"><Chevron dir="up" color="#777" size={9} w={1.2} /></span>
            </th>
            <th aria-label="Date modified" className="w-[144px]" />
            <th aria-label="Type" className="w-[119px]" />
            <th className="border-l border-[#e5e5e5] pl-1.5 font-normal">Size</th>
          </tr>
        </thead>
        <tbody className="text-[#6d6d6d] [&>tr:last-child>td]:border-b">
          <tr><td colSpan={4} className="h-[5px]" /></tr>
          <tr className="h-[22px]">
            <td colSpan={4} className="pb-px pl-1 text-black"><span className="flex items-center gap-1"><Folder />ТЕСТИМ</span></td>
          </tr>
          {files.map((f) => (
            <tr key={f.name} className="h-[21px] bg-[#cce8ff] [&>td]:border-[#a9d3f5] [&>td]:border-t">
              <td className="border-l pl-[3px] text-black"><span className="flex items-center gap-1"><RegFile />{f.name}</span></td>
              <td className="pl-1.5">{f.date}</td>
              <td className="pl-1.5">Registration Entries</td>
              <td className="border-r pr-[3px] text-right">{f.size}</td>
            </tr>
          ))}
        </tbody>
      </table>
      <span className="ml-[3px] h-[25px] w-px bg-[#e5e5e5]" />
    </div>
  );
}

function StatusBar() {
  return (
    <footer className="flex h-6 shrink-0 items-center pl-3.5 text-[#1e395b]">
      <span className="w-[65px]">15 items</span>
      <span className="w-24 whitespace-nowrap">14 items selected</span>
      <span className="flex-1">5.41 KB</span>
      <button aria-label="Details view" className="flex size-[22px] items-center justify-center border border-[#5eb3e4] bg-[#c9e9fb]">
        <Icon><path d="M1.500 2.500h2v2h-2zM1.500 7h2v2h-2zM1.500 11.500h2v2h-2z" stroke="#666" /><path d="M6 3.500h4M11 3.500h4M6 8h4M11 8h4M6 12.500h4M11 12.500h4" stroke="#555" /></Icon>
      </button>
      <button aria-label="Large icons view" className="mr-[9px] flex w-[18px] justify-end">
        <Icon size={14}><path d="M.5 2.500h15v11H.5z" fill="#fff" stroke="#777" /><path d="M2 4h12v8H2z" fill="#9fcdf0" /><path d="M2 7c4 0 7 3 12 3v2H2z" fill="#2f5d50" /></Icon>
      </button>
    </footer>
  );
}

/* ---------- context menu ---------- */

const notepad = <Icon><path d="M.5 1.500h12v14H.5z" fill="#f6f9ee" stroke="#8a9668" /><path d="M2 6h9v8H2z" fill="#8cc63f" /><path d="M2 3.500h9" stroke="#888" strokeDasharray="1 1" /><path d="M14.500 0l1 1.500-5.500 8-2 1 .5-2z" fill="#d0852e" stroke="#5a3c17" strokeWidth=".6" /></Icon>;
const share = <Icon><path d="M.5 4v9.500h11V11" stroke="#333" /><path d="M9 1.500l5 4-5 4V7C6.500 7 4.500 8 3.500 10c.2-3.500 2.500-5.700 5.500-6z" stroke="#333" strokeWidth="1.100" /></Icon>;

type MenuItem = { label: string; icon?: ReactNode; bold?: boolean; sub?: boolean };
const menu: MenuItem[][] = [
  [{ label: "Merge", bold: true }, { label: "Edit" }, { label: "Print" }, { label: "Edit with Notepad++", icon: notepad }, { label: "Share", icon: share }],
  [
    { label: "Give access to", sub: true },
    { label: "Add to archive...", icon: <Rar /> },
    { label: 'Add to "РЕГИ.rar"', icon: <Rar /> },
    { label: "Compress and email...", icon: <Rar /> },
    { label: 'Compress to "РЕГИ.rar" and email', icon: <Rar /> },
  ],
  [{ label: "Send to", sub: true }],
  [{ label: "Cut" }, { label: "Copy" }],
  [{ label: "Create shortcut" }, { label: "Delete" }, { label: "Rename" }],
  [{ label: "Properties" }],
];

function ContextMenu() {
  return (
    <div role="menu" className="absolute top-[174px] left-[492px] w-[293px] border border-[#a0a0a0] bg-[#eee] px-2.5 py-1 text-black">
      {menu.map((group, i) => (
        <div key={group[0].label} role="group" className={i > 0 ? "mt-[3px] border-t border-[#919191] pt-[3px]" : ""}>
          {group.map((m) => (
            <button key={m.label} role="menuitem" className={"flex h-[22px] w-full items-center gap-2 " + (m.bold ? "font-bold" : "")}>
              <span className="flex w-4 shrink-0">{m.icon}</span>
              <span className="flex-1 whitespace-nowrap text-left">{m.label}</span>
              {m.sub ? <Icon size={14} box="0 0 14 14"><path d="M7 1l6 6-6 6" stroke="#333" strokeWidth="1.100" /></Icon> : null}
            </button>
          ))}
        </div>
      ))}
    </div>
  );
}

/* ---------- taskbar ---------- */

function TaskButton({ label, className = "", children }: { label: string; className?: string; children: ReactNode }) {
  return <button aria-label={label} className={"flex w-12 items-center justify-center " + className}>{children}</button>;
}

function TrayButton({ label, children }: { label: string; children: ReactNode }) {
  return <button aria-label={label} className="flex w-6 items-center justify-center">{children}</button>;
}

function Taskbar() {
  return (
    <footer className="flex h-10 shrink-0 bg-gradient-to-r from-[#001520] to-[#020718] text-white">
      <TaskButton label="Start"><Icon><path d="M0 2.300L7 1.300v6.200H0zM8 1.200L16 0v7.500H8zM0 8.500h7v6.200l-7-1zM8 8.500h8V16l-8-1.200z" fill="#fff" /></Icon></TaskButton>
      <label className="flex w-[288px] items-center gap-3 bg-[#f2f2f2] pl-3">
        <Icon><circle cx="10" cy="6" r="5" stroke="#222" strokeWidth="1.300" /><path d="M6.500 9.500L0 16" stroke="#222" strokeWidth="1.300" /></Icon>
        <input aria-label="Search" placeholder="Type here to search" className="h-full min-w-0 flex-1 bg-transparent text-sm outline-none placeholder:text-[#333]" />
        <svg width="74" height="36" viewBox="0 0 74 36" fill="none" aria-hidden="true" className="mr-0.5 shrink-0">
          <path d="M1 19C-1 11 3 6 8 4c4-4 10-4 14-2 5 2 7 8 6 13-5 3-12 2-15 6-2 4-3 8-7 8-3-2-4-6-5-10z" fill="#f4c988" />
          <path d="M13 3c6-3 14 2 14 10-5 3-9 2-12 4-3-4-5-9-2-14z" fill="#e5ab66" />
          <path d="M14 4c4-1 9 2 10 7" stroke="#fbe2b5" strokeWidth="3" />
          <path d="M12 5c-1 6 1 11 5 13" stroke="#e46673" strokeWidth="3" />
          <path d="M10 19c-5-4-9-1-7 3 2 2 6 1 8-1-2 4-1 8 2 10M13 20c4 1 7 5 8 9" stroke="#ee7d86" strokeWidth="2.500" />
          <path d="M22 26l10 5-9 4 1-4zM20 28l-7 3 8 4z" fill="#e46673" />
          <path d="M36 27c-1-4 5-6 9-5h17c4 0 10-2 8 3-1 5-8 8-17 8-8 0-15-2-17-6z" fill="#574a86" />
          <path d="M41 6c6-4 20-5 25-2l-4 20c-5 3-13 3-17 0z" fill="#675b98" />
          <path d="M41 6c6-4 20-5 25-2-3 4-20 6-25 2z" fill="#8a7fb5" />
          <path d="M45 18c5 3 13 3 18-1l-1 6c-5 4-13 4-17 1z" fill="#322855" />
          <path d="M38 26c5 4 22 5 30-1" stroke="#9187bd" />
        </svg>
      </label>
      <TaskButton label="Task view"><Icon><path d="M0 .5h11M0 15.500h11M.5 4.500h10v7H.5zM14.500 0v3M14.500 8v8" stroke="#fff" /><path d="M13 4h3v3h-3z" fill="#fff" /></Icon></TaskButton>
      <div className="flex gap-px pl-[3px]">
        <TaskButton label="Microsoft Edge"><Icon size={24} box="0 0 48 48"><EdgeArt /></Icon></TaskButton>
        <TaskButton label="File Explorer" className="border-b-2 border-[#76b9ed] bg-[#33474f]">
          <Icon size={24} box="0 0 24 24"><path d="M2 3h8l2 2h10v14H2z" fill="#e2a32b" /><path d="M2 7h20v14H2z" fill="#fcd462" /><path d="M5 13h14v9h-4v-5H9v5H5z" fill="#3c91d5" /><path d="M5 13h14v2H5z" fill="#62b1e9" /></Icon>
        </TaskButton>
        <TaskButton label="Firefox"><Icon size={22} box="0 0 48 48"><g transform="translate(2 0)"><FirefoxArt /></g></Icon></TaskButton>
        <div className="flex px-1"><button aria-label="WinRAR" className="flex w-10 items-center justify-center border-b-2 border-[#76b9ed]"><Rar size={24} /></button></div>
      </div>
      <div className="flex flex-1 items-center justify-end">
        <TrayButton label="Show hidden icons"><Icon size={14} box="0 0 14 14"><path d="M1.500 10L7 4.500l5.500 5.500" stroke="#fff" strokeWidth="1.300" /></Icon></TrayButton>
        <TrayButton label="Meet now"><Icon><path d="M4 1.500c2-1 5-1 7 0M4 14.500c2 1 5 1 7 0M3.500 5.500c0-1 1-1.500 2-1.500H10v8H5c-1 0-1.500-1-1.500-2zM10 7l3-2v6l-3-2" stroke="#fff" strokeWidth="1.200" /></Icon></TrayButton>
        <TrayButton label="Volume"><Icon size={18}><path d="M.5 6h2.500L6 3v10l-3-3H.5z" stroke="#fff" /><path d="M8 6c1 1 1 3 0 4M10 4c2 2 2 6 0 8M12 2c3 3 3 9 0 12" stroke="#fff" /></Icon></TrayButton>
        <TrayButton label="Network"><Icon><path d="M4.500 3.500h11v8H5M10 12v2.500M7 14.500h6M.5 1.500h4v4h-4zM2.500 5.500v9" stroke="#fff" /></Icon></TrayButton>
        <button className="w-16 leading-[17px]"><time dateTime="2025-12-21T05:14" className="flex flex-col items-center"><span>5:14 AM</span><span>12/21/2025</span></time></button>
        <button aria-label="Notifications" className="flex w-10 justify-center"><Icon><path d="M.5 1.500h15v11h-5L8 15l-2.500-2.500h-5z" stroke="#fff" strokeWidth="1.100" /></Icon></button>
        <button aria-label="Show desktop" className="ml-2 h-full w-[5px] border-l border-[#555]" />
      </div>
    </footer>
  );
}

function Watermark() {
  return (
    <div className="pointer-events-none absolute right-[49px] bottom-2 flex items-center gap-1 font-['Noto_Sans_CJK_SC',sans-serif] text-[35px] leading-[60px] font-light text-white opacity-50">
      <span>ANY</span>
      <svg width="58" height="60" viewBox="0 0 58 60" fill="none" stroke="#fff" strokeWidth="4" strokeLinejoin="round" strokeLinecap="round" aria-hidden="true">
        <path d="M9 7q-4 0-4 4v35q0 3 3 3M14 44V3L53 23M23 32V13l30 17q4 3 0 6L19 57q-4 1-4-3v-3L46 32" />
      </svg>
      <span>RUN</span>
    </div>
  );
}

export default function App() {
  return (
    <div className="flex min-h-screen flex-col overflow-hidden font-['Open_Sans','Noto_Sans',sans-serif] text-[11px] leading-4">
      <main className="relative flex-1 bg-[radial-gradient(1400px_1150px_at_3%_80%,#00b4ff_0%,#00aeff_18%,#009cf6_36%,#0080e6_56%,#0060d8_76%,#0448bc_92%,#0644b0_100%)]">
        <Desktop />
        <div className="absolute top-[74px] right-[108px] bottom-[61px] left-32 flex flex-col bg-white">
          <TitleBar />
          <Tabs />
          <Ribbon />
          <AddressBar />
          <div className="flex min-h-0 flex-1">
            <NavPane />
            <FileList />
          </div>
          <StatusBar />
        </div>
        <ContextMenu />
        <Watermark />
      </main>
      <Taskbar />
    </div>
  );
}
